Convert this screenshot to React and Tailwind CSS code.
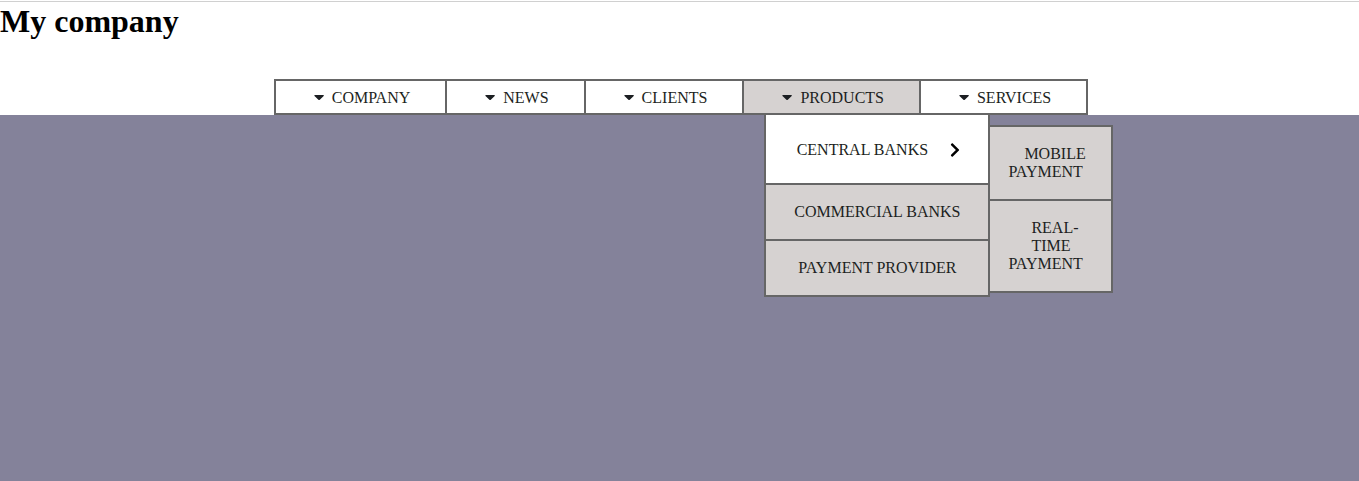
import { FaChevronRight } from "react-icons/fa";

const before = ["COMPANY", "NEWS", "CLIENTS"];

function Caret() {
  return (
    <svg viewBox="0 0 10 16" className="h-4 w-[10px]" fill="currentColor" aria-hidden="true">
      <path d="M1 5H9.2C9.9 5 10.1 5.6 9.7 6L5.8 9.8C5.4 10.2 4.8 10.2 4.4 9.8L0.5 6C0.1 5.6 0.3 5 1 5Z" />
    </svg>
  );
}

function TopItem({ label, active, last, children }) {
  return (
    <li
      className={
        "relative border-y-2 border-l-2 border-[#666666] " +
        (active ? "bg-[#d6d2d1] " : "bg-white ") +
        (last ? "border-r-2" : "")
      }
    >
      <a href="#" className="flex h-8 items-center gap-2 pt-[2px] pr-[35px] pl-[38px]">
        <Caret />
        {label}
      </a>
      {children}
    </li>
  );
}

function ProductsMenu() {
  return (
    <ul className="absolute top-8 left-5 z-10 w-[226px] border-2 border-[#666666] bg-[#d6d2d1] text-center">
      <li className="relative bg-white">
        <a href="#" className="flex h-[68px] items-center justify-center gap-5 pt-[2px] pl-1 whitespace-nowrap">
          CENTRAL BANKS
          <FaChevronRight className="h-4 w-[14px] text-black" aria-hidden="true" />
        </a>
        <ul className="absolute top-[10px] left-full w-[125px] border-2 border-[#666666] bg-[#d6d2d1] text-left leading-[18px]">
          <li>
            <a href="#" className="block py-[18px] pl-[18px]">
              <span className="block pl-4">MOBILE</span>
              PAYMENT
            </a>
          </li>
          <li className="border-t-2 border-[#666666]">
            <a href="#" className="block py-[18px] pl-[18px]">
              <span className="block pl-[23px]">REAL-</span>
              <span className="block pl-[23px]">TIME</span>
              PAYMENT
            </a>
          </li>
        </ul>
      </li>
      <li className="border-t-2 border-[#666666]">
        <a href="#" className="flex h-[54px] items-center justify-center">COMMERCIAL BANKS</a>
      </li>
      <li className="border-t-2 border-[#666666]">
        <a href="#" className="flex h-[54px] items-center justify-center">PAYMENT PROVIDER</a>
      </li>
    </ul>
  );
}

export default function App() {
  return (
    <div className="flex min-h-screen flex-col bg-[#84829a] font-['Liberation_Serif',serif] text-base text-[#1c1f22]">
      <header className="bg-white pt-px">
        <div className="border-t border-[#d0d0d0]">
          <h1 className="text-[32px] leading-[38px] font-bold text-black">My company</h1>
          <nav aria-label="Main" className="mt-[39px] flex justify-center pl-[3px]">
            <ul className="flex">
              {before.map((label) => (
                <TopItem key={label} label={label} />
              ))}
              <TopItem label="PRODUCTS" active>
                <ProductsMenu />
              </TopItem>
              <TopItem label="SERVICES" last />
            </ul>
          </nav>
        </div>
      </header>
    </div>
  );
}
